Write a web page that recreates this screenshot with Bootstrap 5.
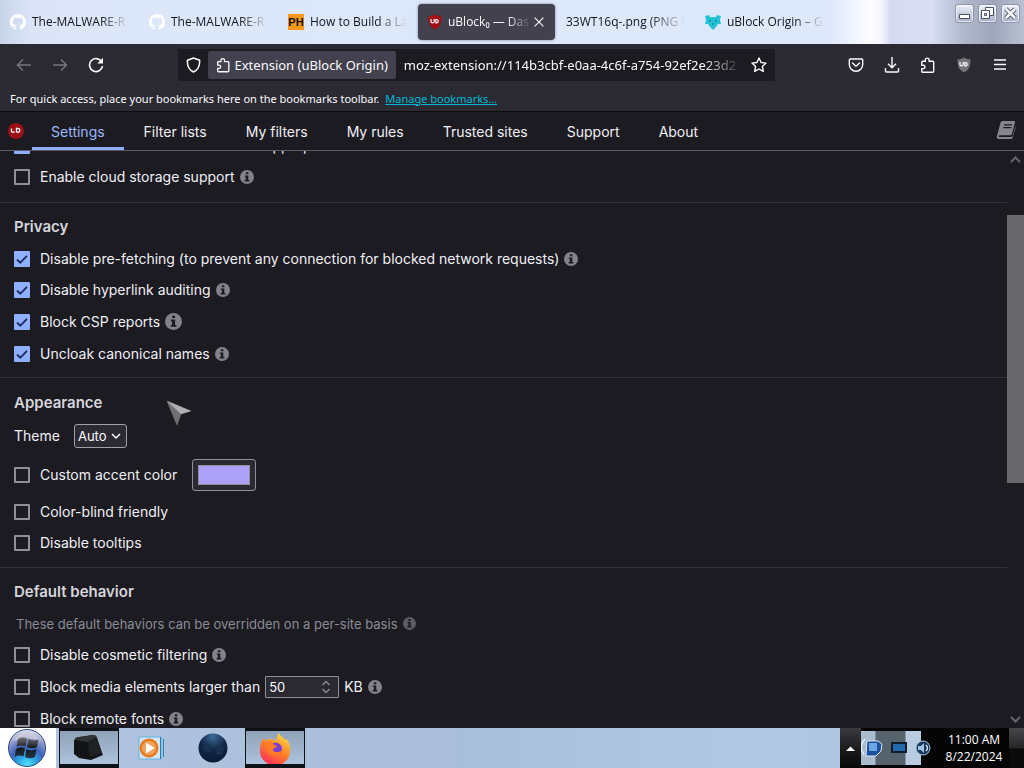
<!DOCTYPE html>
<html lang="en" data-bs-theme="dark">
<head>
<meta charset="utf-8">
<meta name="viewport" content="width=device-width, initial-scale=1">
<title>uBlock₀ — Dashboard</title>
<link href="https://cdn.jsdelivr.net/npm/bootstrap@5.3.0/dist/css/bootstrap.min.css" rel="stylesheet">
<style>
:root{--ui:"Open Sans","Noto Sans",sans-serif;--wide:"Noto Sans","Open Sans",sans-serif;--page:Inter,"Liberation Sans",sans-serif;--ink:#f0f0f4;--accent:#8fb0ff}
body{font-family:var(--ui);font-size:12px;line-height:16px;background:#1c1b22;color:#fbfbfe}
button{background:none;border:0;padding:0;color:inherit;line-height:1}
svg{display:block;flex:none}

/* window frame and tabs */
.tabstrip{height:44px;color:#15141a;background:linear-gradient(90deg,#c9d4ea 0,#dbe5f7 3%,#dce7fa 18%,#dde8fb 81%,#eef4fd 83%,#fdfdff 85%,#f6f6fe 86%,#d5daf0 87%,#d9dff2 91%,#b3b9cc 94%,#a0a6ba 97%,#b9c0d2 100%)}
.tabstrip .tabs{flex:0 1 834px;min-width:0}
.tab-slot{flex:1 1 0;min-width:0;padding:4px 1px}
.tab-face{height:36px;padding:0 9px;gap:6px;color:inherit;text-decoration:none;border-radius:4px}
.tab-face.current{background:#42414d;color:#fbfbfe;box-shadow:0 0 3px #0006;gap:5px}
.tab-text{flex:1 1 0;min-width:0;white-space:nowrap;overflow:hidden;-webkit-mask-image:linear-gradient(90deg,#000 70%,transparent);mask-image:linear-gradient(90deg,#000 70%,transparent)}
.current .tab-text{margin-right:-5px}
.ph{width:16px;height:16px;background:#f7971d;color:#111;font:bold 11px/16px "Liberation Sans",sans-serif;text-align:center}
.winbtn{width:19px;height:19px;border:1px solid #8c93ab;border-radius:3px;background:linear-gradient(#eef1fa,#a9b0c6);box-shadow:inset 0 0 0 1px #ffffffb0}

/* toolbar */
.toolbar{height:42px;background:#2b2a33;padding:0 12px 0 16px}
.urlbar{height:32px;width:597px;flex:0 1 597px;background:#1c1b22;min-width:0}
.shield-btn{padding:0 7px 0 8px}
.identity{height:28px;background:#42414d;border-radius:2px;padding:0 8px;gap:4px;font-family:var(--wide);font-size:13px;white-space:nowrap}
.url{background:none;border:0;padding:0 0 0 8px;color:#fbfbfe;font-family:var(--wide);font-size:13px;min-width:0;flex:1 1 0;outline:0;-webkit-mask-image:linear-gradient(90deg,#000 88%,transparent);mask-image:linear-gradient(90deg,#000 88%,transparent)}
.bookmarks{height:26px;background:#2b2a33;padding:0 10px;gap:6px;border-bottom:1px solid #0c0c0d;font-family:var(--wide);font-size:11px}
.bookmarks a{color:#00b8d4}

/* dashboard */
.dash{font-family:var(--page);font-size:14px;line-height:20px;color:var(--ink)}
.dash-nav{height:39px;border-bottom:1px solid #5b5b66;padding:0 8px 0 8px}
.dash-nav .links{gap:1px}
.dash-nav a{color:var(--ink);text-decoration:none;padding:0 19px;height:38px;line-height:40px;border-bottom:3px solid transparent;white-space:nowrap}
.dash-nav a.active{color:#9bb8fa;border-color:var(--accent)}
.pane{overflow:hidden;min-height:0}
.pane-body{margin-top:-21px;overflow:hidden}
.group{padding:8px 14px;border-bottom:1px solid #33323b;display:flow-root}
.group.roomy{padding-top:9px;padding-bottom:9px}
.group.first{padding-top:0;padding-bottom:10px}
.group h2{font-size:15px;font-weight:600;line-height:32px;margin:0;color:#d6d6dc}
.opt{height:31px;gap:5px}
.opt.tall{height:33px}
.opt.theme{height:34px;gap:14px}
.opt.swatch{height:43px}
.opt label{white-space:nowrap}
.dash .form-check-input{width:16px;height:16px;margin:0 5px 0 0;border:2px solid #8f8f9a;border-radius:1px;background-color:transparent;flex:none}
.dash .form-check-input:checked{border-color:var(--accent);background-color:var(--accent);background-size:16px 16px;background-image:url("data:image/svg+xml,%3Csvg xmlns='http://www.w3.org/2000/svg' viewBox='0 0 16 16'%3E%3Cpath d='M3 8.5l3.3 3.2L13 4.8' fill='none' stroke='%231c2b5c' stroke-width='1.8'/%3E%3C/svg%3E")}
.info{color:#82828a}
.note{color:#8b8b93;padding-left:2px;font-size:13px}
.note .info{color:#5d5d66}
.theme select{width:53px;height:24px;padding:0 3px;border:1px solid #a0a0aa;border-radius:3px;font:13px/20px var(--page);color:#fbfbfe;appearance:none;background:#2b2a33 url("data:image/svg+xml,%3Csvg xmlns='http://www.w3.org/2000/svg' viewBox='0 0 10 10'%3E%3Cpath d='M1 3l4 4 4-4' fill='none' stroke='white' stroke-width='1.5'/%3E%3C/svg%3E") no-repeat right 5px center/10px}
.swatch input[type=color]{width:64px;height:32px;padding:5px;margin-left:10px;border:1px solid #8f8f9a;border-radius:3px;background:#2b2a33}
input[type=color]::-webkit-color-swatch-wrapper{padding:0}
input[type=color]::-webkit-color-swatch{border:1px solid #8f8f9a;border-radius:0}
.kb{width:74px;height:22px;padding:0 3px;border:1px solid #8f8f9a;border-radius:1px;color:#fbfbfe;font:13px/18px var(--page);appearance:textfield;background:#2b2a33 url("data:image/svg+xml,%3Csvg xmlns='http://www.w3.org/2000/svg' viewBox='0 0 10 16'%3E%3Cpath d='M1.5 6L5 2.5 8.5 6M1.5 10L5 13.500 8.500 10' fill='none' stroke='%23888891' stroke-width='1.500'/%3E%3C/svg%3E") no-repeat right 7px center/10px 16px}
.kb::-webkit-inner-spin-button{appearance:none}
.rail{width:17px;flex:none;color:#66666e}
.rail .track{position:relative;flex:1}
.rail .thumb{position:absolute;left:0;right:0;background:#68676c}
.pointer{position:absolute;left:166px;top:399px}

/* taskbar */
.taskbar{height:40px;background:linear-gradient(90deg,#b0c4de,#a9bedb 45%,#b1c8e3 75%,#a9bfd9 95%,#8195ac)}
.start{width:56px;height:40px;background:#fff}
.tasks{gap:2px;padding-left:3px}
.task{width:60px;height:40px}
.task.open{border:1px solid #0e1116;border-width:3px 1px 4px;background:linear-gradient(#8fa2b8,#adc3dc)}
.tray{width:184px;background:#050506;color:#fff}
.tray-up{width:21px;height:40px;background:linear-gradient(#3a3a3c,#1c1c1e 50%,#080808);padding-left:6px}
.tray-icons{width:70px;height:34px;background:linear-gradient(90deg,#a9bccd 0 14px,#56626c 15px 44px,#b9cce0 45px 60px,transparent 60px)}
.clock{font-size:12px;line-height:17px}
.peek{width:15px;height:40px;background:linear-gradient(#48484a,#262628 50%,#0a0a0a 52%)}
</style>
</head>
<body class="vh-100 overflow-hidden d-flex flex-column">

<svg width="0" height="0" class="position-absolute" aria-hidden="true">
  <symbol id="i-info" viewBox="0 0 16 16"><circle cx="8" cy="8" r="8" fill="currentColor"/><path d="M6.700 2.500h2.800v2.300H6.700zM5.500 6.200h4v5.200h1.200V13H5.300v-1.600h1.300V7.800H5.500z" fill="#1c1b22"/></symbol>
  <symbol id="i-shield" viewBox="0 0 16 16"><path d="M8 .5C6 1.900 3.700 2.300 1.500 2.300c0 6 .7 10 6.500 13.300 5.800-3.300 6.500-7.300 6.500-13.300C12.300 2.300 10 1.900 8 .5z" fill="currentColor"/><path d="M4 5v2.200a1.600 1.600 0 0 0 3.200 0V5M8.900 5.500v3.300h1a1.700 1.700 0 0 0 0-3.300z" fill="none" stroke="#fff" stroke-width="1.200"/></symbol>
  <symbol id="i-puzzle" viewBox="0 0 16 16"><path d="M1.800 5.300a1 1 0 0 1 1-1h2.500V3a1.900 1.900 0 0 1 3.800 0v1.300h3.600a1 1 0 0 1 1 1v8.900a1 1 0 0 1-1 1H2.800a1 1 0 0 1-1-1v-2.600h1.500a1.700 1.700 0 0 0 0-3.400H1.800z" fill="none" stroke="currentColor" stroke-width="1.400"/></symbol>
  <symbol id="i-github" viewBox="0 0 16 16"><path fill="currentColor" d="M8 0C3.580 0 0 3.580 0 8c0 3.540 2.290 6.530 5.470 7.590.4.070.55-.17.55-.38v-1.490c-2.010.37-2.530-.49-2.690-.94-.09-.23-.48-.94-.82-1.130-.28-.15-.68-.52-.01-.53.63-.01 1.080.58 1.230.82.720 1.210 1.870.87 2.330.66.070-.52.280-.87.510-1.070-1.780-.2-3.640-.89-3.640-3.950 0-.87.310-1.590.82-2.150-.08-.2-.36-1.020.08-2.120 0 0 .67-.21 2.200.82a7.600 7.600 0 0 1 4 0c1.530-1.040 2.200-.82 2.200-.82.440 1.100.160 1.920.08 2.120.510.560.82 1.270.82 2.150 0 3.070-1.870 3.750-3.650 3.950.290.250.540.730.540 1.480v2.200c0 .21.150.460.550.380A8 8 0 0 0 16 8c0-4.420-3.580-8-8-8z"/></symbol>
</svg>

<header>
  <div class="tabstrip d-flex">
    <nav class="tabs d-flex" aria-label="Open tabs">
      <div class="tab-slot"><a href="#" class="tab-face d-flex align-items-center"><svg width="16" height="16" color="#fff"><use href="#i-github"/></svg><span class="tab-text">The-MALWARE-R</span></a></div>
      <div class="tab-slot"><a href="#" class="tab-face d-flex align-items-center"><svg width="16" height="16" color="#fff"><use href="#i-github"/></svg><span class="tab-text">The-MALWARE-R</span></a></div>
      <div class="tab-slot"><a href="#" class="tab-face d-flex align-items-center"><span class="ph">PH</span><span class="tab-text">How to Build a La</span></a></div>
      <div class="tab-slot"><div class="tab-face current d-flex align-items-center"><svg width="16" height="16" color="#a30d16"><use href="#i-shield"/></svg><span class="tab-text">uBlock₀ — Das</span>
        <button aria-label="Close tab"><svg width="14" height="14" viewBox="0 0 16 16"><path d="M3 3l10 10M13 3l-10 10" stroke="currentColor" stroke-width="1.300"/></svg></button></div></div>
      <div class="tab-slot"><a href="#" class="tab-face d-flex align-items-center"><span class="tab-text">33WT16q-.png (PNG I</span></a></div>
      <div class="tab-slot"><a href="#" class="tab-face d-flex align-items-center"><svg width="16" height="16" viewBox="0 0 16 16"><path d="M0 2l4-1 1 2h6l1-2 4 1-1 4 1 4-3 0-2 3-3 3-3-3-2-3-3 0 1-4z" fill="#25c2d4"/><path d="M4 6h2v2H4zM10 6h2v2h-2zM7 9h2v2H7z" fill="#1297aa"/></svg><span class="tab-text">uBlock Origin – G</span></a></div>
    </nav>
    <div class="d-flex ms-auto pt-1 pe-1 gap-1">
      <button class="winbtn" aria-label="Minimize"><svg width="17" height="17" viewBox="0 0 17 17"><path d="M3.500 9.500h10v4h-10z" fill="#fff" stroke="#4b5169"/></svg></button>
      <button class="winbtn" aria-label="Restore"><svg width="17" height="17" viewBox="0 0 17 17"><path d="M6.500 2.500h8v8h-8z" fill="#fff" stroke="#4b5169"/><path d="M2.500 5.500h8v8h-8zM5.500 8.500h2v2h-2z" fill="#fff" stroke="#4b5169"/></svg></button>
      <button class="winbtn" aria-label="Close"><svg width="17" height="17" viewBox="0 0 17 17"><path d="M4 4l9 9M13 4l-9 9" stroke="#4b5169" stroke-width="4.500"/><path d="M4 4l9 9M13 4l-9 9" stroke="#fff" stroke-width="2.500"/></svg></button>
    </div>
  </div>

  <div class="toolbar d-flex align-items-center">
    <div class="d-flex align-items-center" style="gap:20px">
      <button aria-label="Back"><svg width="16" height="16" viewBox="0 0 16 16" fill="none" stroke="#777680" stroke-width="1.400"><path d="M15 8H1.500M7 2.500L1.500 8 7 13.500"/></svg></button>
      <button aria-label="Forward"><svg width="16" height="16" viewBox="0 0 16 16" fill="none" stroke="#777680" stroke-width="1.400"><path d="M1 8h13.500M9 2.500L14.500 8 9 13.500"/></svg></button>
      <button aria-label="Reload"><svg width="16" height="16" viewBox="0 0 16 16"><path d="M13.500 4.500A6.500 6.500 0 1 0 14.500 9" fill="none" stroke="#fbfbfe" stroke-width="1.600"/><path d="M15 .8v5.700H9.300z" fill="#fbfbfe"/></svg></button>
    </div>
    <div class="urlbar d-flex align-items-center ms-auto">
      <button class="shield-btn" aria-label="Site protections"><svg width="15" height="16" viewBox="0 0 15 16"><path d="M7.500 1L13.600 3.200c.4 5-1.100 9.300-6.100 11.800-5-2.500-6.500-6.800-6.100-11.800z" fill="none" stroke="#fbfbfe" stroke-width="1.500" stroke-linejoin="round"/></svg></button>
      <button class="identity d-flex align-items-center"><svg width="15" height="16"><use href="#i-puzzle"/></svg>Extension (uBlock Origin)</button>
      <input class="url" type="text" aria-label="Address" value="moz-extension://114b3cbf-e0aa-4c6f-a754-92ef2e23d2">
      <button class="ps-2 pe-2" aria-label="Bookmark this page"><svg width="16" height="16" viewBox="0 0 16 16"><path d="M8 1l2.100 4.500 4.900.6-3.600 3.400.9 4.900L8 12l-4.300 2.400.9-4.900L1 6.100l4.900-.6z" fill="none" stroke="#fbfbfe" stroke-width="1.400" stroke-linejoin="round"/></svg></button>
    </div>
    <div class="d-flex align-items-center ms-auto pe-1" style="gap:20px">
      <button aria-label="Save to Pocket"><svg width="16" height="16" viewBox="0 0 16 16" fill="none" stroke="#fbfbfe" stroke-width="1.400"><path d="M2.500 2h11a1.200 1.200 0 0 1 1.200 1.200V7.500a6.700 6.700 0 0 1-13.400 0V3.200A1.200 1.200 0 0 1 2.500 2z"/><path d="M4.500 6L8 9.300 11.500 6" stroke-linecap="round"/></svg></button>
      <button aria-label="Downloads"><svg width="16" height="16" viewBox="0 0 16 16" fill="none" stroke="#fbfbfe" stroke-width="1.400"><path d="M8 0v10.500M4 6.700l4 4 4-4M1.500 11v3a1 1 0 0 0 1 1h11a1 1 0 0 0 1-1v-3"/></svg></button>
      <button aria-label="Extensions"><svg width="16" height="16"><use href="#i-puzzle"/></svg></button>
      <button aria-label="uBlock Origin"><svg width="16" height="16" color="#74747b"><use href="#i-shield"/></svg></button>
      <button aria-label="Menu"><svg width="16" height="16" viewBox="0 0 16 16" stroke="#fbfbfe" stroke-width="1.400"><path d="M2 3h12M2 7.500h12M2 12h12"/></svg></button>
    </div>
  </div>
  <div class="bookmarks d-flex align-items-center text-nowrap"><span>For quick access, place your bookmarks here on the bookmarks toolbar.</span><a href="#">Manage bookmarks…</a></div>
</header>

<main class="dash d-flex flex-column flex-fill" style="min-height:0">
  <nav class="dash-nav d-flex align-items-center" aria-label="Dashboard">
    <svg width="16" height="16" viewBox="0 0 16 16"><circle cx="8" cy="8" r="8" fill="#9c1015"/><path d="M3.500 5.500v2.700a1 1 0 0 0 1 1h2.300M8.500 5.300v3.900h1.300a1.900 1.900 0 0 0 0-3.900z" fill="none" stroke="#fff" stroke-width="1.300"/></svg>
    <div class="links d-flex ms-2">
      <a href="#" class="active">Settings</a><a href="#">Filter lists</a><a href="#">My filters</a><a href="#">My rules</a><a href="#">Trusted sites</a><a href="#">Support</a><a href="#">About</a>
    </div>
    <a href="#" class="ms-auto p-0 d-flex align-items-center" aria-label="Documentation"><svg width="20" height="20" viewBox="0 0 20 20"><path d="M6.500 1h11.500a1 1 0 0 1 1 1.300l-3.200 12a1.500 1.500 0 0 1-1.400 1H3.500c-1 0-1 1.700 0 1.700h11.700a1.500 1.500 0 0 0 1.400-1L19.500 6v2l-3 10a1.500 1.500 0 0 1-1.400 1H3A2.300 2.300 0 0 1 1 15.700L4.600 2.500A2 2 0 0 1 6.500 1z" fill="#85858b"/><path d="M8 4.800h8M7.300 7.600h8" stroke="#1c1b22" stroke-width="1.300"/></svg></a>
  </nav>

  <div class="pane d-flex flex-fill">
    <div class="pane-body flex-fill">
      <section class="group first">
        <div class="opt d-flex align-items-center"><input class="form-check-input" type="checkbox" id="ctx" checked><label for="ctx">Make use of context menu where appropriate</label></div>
        <div class="opt d-flex align-items-center"><input class="form-check-input" type="checkbox" id="cloud"><label for="cloud">Enable cloud storage support</label><svg class="info" width="14" height="14"><use href="#i-info"/></svg></div>
      </section>
      <section class="group">
        <h2>Privacy</h2>
        <div class="opt d-flex align-items-center"><input class="form-check-input" type="checkbox" id="pre" checked><label for="pre">Disable pre-fetching (to prevent any connection for blocked network requests)</label><svg class="info" width="14" height="14"><use href="#i-info"/></svg></div>
        <div class="opt d-flex align-items-center"><input class="form-check-input" type="checkbox" id="audit" checked><label for="audit">Disable hyperlink auditing</label><svg class="info" width="14" height="14"><use href="#i-info"/></svg></div>
        <div class="opt tall d-flex align-items-center"><input class="form-check-input" type="checkbox" id="csp" checked><label for="csp">Block CSP reports</label><svg class="info" width="17" height="17"><use href="#i-info"/></svg></div>
        <div class="opt d-flex align-items-center"><input class="form-check-input" type="checkbox" id="cname" checked><label for="cname">Uncloak canonical names</label><svg class="info" width="14" height="14"><use href="#i-info"/></svg></div>
      </section>
      <section class="group roomy">
        <h2>Appearance</h2>
        <div class="opt theme d-flex align-items-center"><label for="theme">Theme</label><select id="theme"><option>Auto</option><option>Light</option><option>Dark</option></select></div>
        <div class="opt swatch d-flex align-items-center"><input class="form-check-input" type="checkbox" id="accent"><label for="accent">Custom accent color</label><input type="color" value="#aca0f7" aria-label="Accent color"></div>
        <div class="opt d-flex align-items-center"><input class="form-check-input" type="checkbox" id="cb"><label for="cb">Color-blind friendly</label></div>
        <div class="opt d-flex align-items-center"><input class="form-check-input" type="checkbox" id="tips"><label for="tips">Disable tooltips</label></div>
      </section>
      <section class="group">
        <h2>Default behavior</h2>
        <div class="opt note d-flex align-items-center">These default behaviors can be overridden on a per-site basis<svg class="info" width="13" height="13"><use href="#i-info"/></svg></div>
        <div class="opt d-flex align-items-center"><input class="form-check-input" type="checkbox" id="cosm"><label for="cosm">Disable cosmetic filtering</label><svg class="info" width="14" height="14"><use href="#i-info"/></svg></div>
        <div class="opt tall d-flex align-items-center"><input class="form-check-input" type="checkbox" id="media"><label for="media">Block media elements larger than</label><input class="kb" type="number" value="50" aria-label="Size limit"><span>KB</span><svg class="info" width="14" height="14"><use href="#i-info"/></svg></div>
        <div class="opt d-flex align-items-center"><input class="form-check-input" type="checkbox" id="fonts"><label for="fonts">Block remote fonts</label><svg class="info" width="14" height="14"><use href="#i-info"/></svg></div>
      </section>
    </div>
    <div class="rail d-flex flex-column align-items-stretch">
      <svg width="17" height="17" viewBox="0 0 17 17"><path d="M4 11l4.500-4.500L13 11" fill="none" stroke="currentColor" stroke-width="2"/></svg>
      <div class="track"><div class="thumb" style="top:8.7%;height:49.4%"></div></div>
      <svg width="17" height="17" viewBox="0 0 17 17"><path d="M4 6l4.500 4.500L13 6" fill="none" stroke="currentColor" stroke-width="2"/></svg>
    </div>
  </div>
</main>

<footer class="taskbar d-flex align-items-center">
  <button class="start d-flex align-items-center ps-2" aria-label="Start"><svg width="38" height="38" viewBox="0 0 38 38">
    <defs><radialGradient id="orb" cx=".5" cy=".95" r=".95"><stop offset="0" stop-color="#4fe3ff"/><stop offset=".3" stop-color="#2a9fe0"/><stop offset=".5" stop-color="#3f63b8"/><stop offset=".75" stop-color="#8f98cc"/><stop offset="1" stop-color="#e4e6f2"/></radialGradient>
    <linearGradient id="flag" x1="0" y1="0" x2="0" y2="1"><stop offset="0" stop-color="#77747a"/><stop offset=".5" stop-color="#15171c"/><stop offset="1" stop-color="#22364a"/></linearGradient></defs>
    <circle cx="19" cy="19" r="18.500" fill="url(#orb)" stroke="#2f4a78"/><path d="M5 12Q19-6 33 12 19 7 5 12z" fill="#d2d2da" opacity=".7"/>
    <path d="M10 10q4-3 9-.5l-1.500 8q-5-2-9 .5zM20.500 10q5 2.500 10 0l-1.500 8q-5 2.500-10 0zM8 20q4-3 9-.5l-1.500 8q-5-2-9 .5zM18.500 20q5 2.500 10 0l-1.500 8q-5 2.500-10 0z" fill="url(#flag)"/></svg></button>
  <div class="tasks d-flex align-items-center flex-fill">
    <button class="task open d-flex align-items-center justify-content-center" aria-label="Computer"><svg width="32" height="28" viewBox="0 0 32 28"><path d="M1 7Q2 3 6 3l14-2q3 0 4 3l5 15 1 2-12 5-12-2-5-4z" fill="#121415"/><path d="M2 6q1-3 5-3l13-2q3 0 4 2l-9 5z" fill="#303437"/><path d="M15 8l9-4 5 15-12 4z" fill="#1e2224"/></svg></button>
    <button class="task d-flex align-items-center justify-content-center" aria-label="Media Player"><svg width="27" height="26" viewBox="0 0 27 26"><path d="M1 2h22v22H1z" fill="#d5e5f4" stroke="#5fb4e6"/><path d="M22.500 2v22M25.500 4v18" stroke="#2b84b8"/><circle cx="11" cy="13" r="9.500" fill="#e87a1c"/><circle cx="11" cy="13" r="7" fill="#f3a45c"/><path d="M8 7.500l8.500 5.500L8 18.500z" fill="#fff"/></svg></button>
    <button class="task d-flex align-items-center justify-content-center" aria-label="Globe"><svg width="30" height="30" viewBox="0 0 30 30"><defs><radialGradient id="globe" cx=".5" cy=".1" r=".9"><stop offset="0" stop-color="#3c6a96"/><stop offset=".5" stop-color="#12294a"/><stop offset="1" stop-color="#0a1a33"/></radialGradient></defs><circle cx="15" cy="15" r="14.500" fill="url(#globe)"/><path d="M5 13l5-3 4 4-3 5-5-1zM18 17l4-5 4 4-3 5-4 1z" fill="#1a3250"/></svg></button>
    <button class="task open d-flex align-items-center justify-content-center" aria-label="Firefox"><svg width="32" height="32" viewBox="0 0 32 32"><defs><linearGradient id="fox" x1=".8" y1="0" x2=".25" y2="1"><stop offset="0" stop-color="#ffe14a"/><stop offset=".45" stop-color="#ff8a22"/><stop offset="1" stop-color="#ff2a5f"/></linearGradient></defs><path d="M20 1c1 3 4 4 6 7 1 0 2-1 2-1 2 4 4 8 3 13A15 15 0 0 1 1 17c0-5 2-9 4-11l1 3c2-2 4-2 6-2 2 0 3 1 5 2 1-3 1-6 3-8z" fill="url(#fox)"/><circle cx="16.500" cy="17" r="6.500" fill="#7b3fd0"/><path d="M5 11c4-3 9-1 10 2l3 1c-1 2-4 2-4 4 1 3 6 3 9 0-1 6-10 8-14 3-2-3-2-7-4-10z" fill="#ff7b26"/></svg></button>
  </div>
  <div class="tray d-flex align-items-center">
    <button class="tray-up" aria-label="Show hidden icons"><svg width="9" height="5" viewBox="0 0 9 5"><path d="M0 5l4.500-4.500L9 5z" fill="#fff"/></svg></button>
    <div class="tray-icons d-flex align-items-center justify-content-between">
      <svg width="22" height="20" viewBox="0 0 22 20"><path d="M4 1Q-3 8 3 17" fill="none" stroke="#dff2ff" stroke-width="1.500"/><path d="M6 3h11l4 3-1 7-5 5H5z" fill="#1d4f9c" stroke="#d5e8fa"/><path d="M8 5h8v8H8z" fill="#6aa5e6"/></svg>
      <svg width="18" height="14" viewBox="0 0 18 14"><path d="M1 1h16v11H1z" fill="#0d1c2e"/><path d="M3 3h12v7H3z" fill="#2368a8"/></svg>
      <svg width="16" height="16" viewBox="0 0 16 16"><circle cx="8" cy="8" r="7" fill="#16385c" stroke="#a9c8e0"/><path d="M3 6h3l3-3v10l-3-3H3z" fill="#9fc3e0"/><path d="M11 5q3 3 0 6" fill="none" stroke="#dcebf7" stroke-width="1.300"/></svg>
    </div>
    <div class="clock flex-fill text-center ps-2"><div>11:00 AM</div><div>8/22/2024</div></div>
    <div class="peek"></div>
  </div>
</footer>

<svg class="pointer" width="26" height="27" viewBox="0 0 26 27" aria-hidden="true"><path d="M1 2l24 10-10 3-4 11z" fill="#8d8d8f" stroke="#5a5a5c" stroke-width=".8"/><path d="M1 2l14 13-4 11z" fill="#707073"/><path d="M1 2l24 10-10 3z" fill="#b0b0b2"/></svg>
<script src="https://cdn.jsdelivr.net/npm/bootstrap@5.3.0/dist/js/bootstrap.bundle.min.js"></script>
</body>
</html>
